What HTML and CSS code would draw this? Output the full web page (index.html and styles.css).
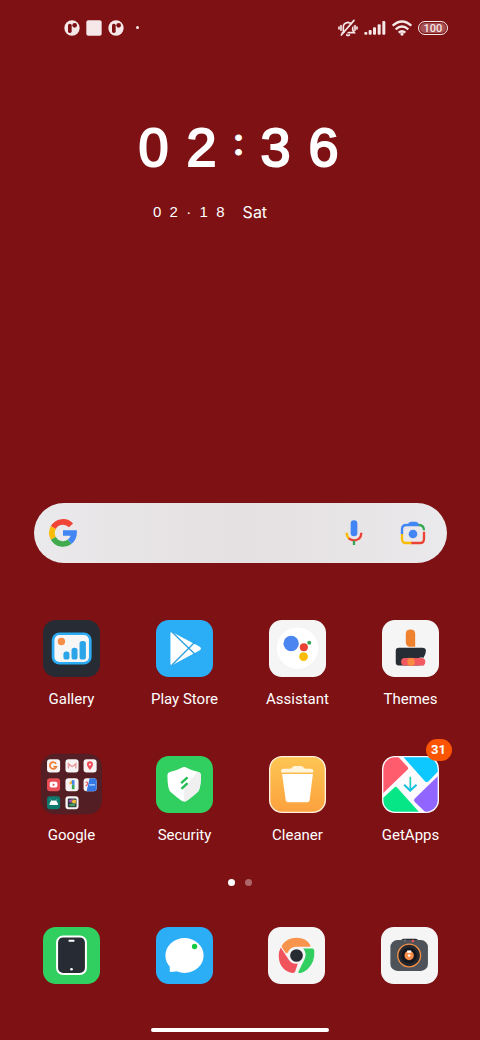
FILE: index.html
```html
<!DOCTYPE html>
<html lang="en">
<head>
<meta charset="utf-8">
<meta name="viewport" content="width=device-width, initial-scale=1">
<title>Home screen</title>
<link rel="stylesheet" href="styles.css">
</head>
<body>
<header class="status">
  <div class="status-group notifications">
    <svg width="16" height="16" viewBox="0 0 48 48" aria-hidden="true"><circle cx="24" cy="24" r="23" fill="#f6e8e8"/><rect x="12" y="11" width="11" height="28" rx="5" fill="#7d1114"/><circle cx="32" cy="16" r="7" fill="#7d1114"/></svg>
    <svg width="16" height="16" viewBox="0 0 48 48" aria-hidden="true"><rect x="1" y="1" width="46" height="46" rx="6" fill="#f6e8e8"/></svg>
    <svg width="16" height="16" viewBox="0 0 48 48" aria-hidden="true"><circle cx="24" cy="24" r="23" fill="#f6e8e8"/><rect x="12" y="11" width="11" height="28" rx="5" fill="#7d1114"/><circle cx="32" cy="16" r="7" fill="#7d1114"/></svg>
    <span class="more-dot"></span>
  </div>
  <div class="status-group">
    <svg width="20" height="18" viewBox="0 0 60 54" fill="none" stroke="#f6e8e8" stroke-width="5" stroke-linecap="round" aria-hidden="true"><path d="M16 39V24q0-12 14-14 14 2 14 14v9l5 8H14zM26 48q4 3 8 0M9 20v14M3 24v6M51 20v14M57 24v6"/><path d="M15 51 53 7" stroke="#7d1114" stroke-width="7"/><path d="M10 48 48 4"/></svg>
    <svg width="22" height="16" viewBox="0 0 66 48" fill="#f6e8e8" aria-hidden="true"><rect x="1" y="36" width="9" height="8" rx="3"/><rect x="14" y="30" width="9" height="14" rx="3"/><rect x="27" y="22" width="9" height="22" rx="3"/><rect x="41" y="13" width="9" height="31" rx="3"/><rect x="55" y="3" width="9" height="41" rx="3"/></svg>
    <svg width="20" height="16" viewBox="0 0 60 48" fill="none" stroke="#f6e8e8" stroke-width="7" aria-hidden="true"><path d="M2 17Q30-8 58 17M11 28q19-17 38 0M20 38q10-9 20 0"/><circle cx="30" cy="42" r="5" fill="#f6e8e8" stroke="none"/></svg>
    <span class="battery">100</span>
  </div>
</header>

<main class="home">
  <section class="clock">
    <time class="time" datetime="02:36"><span>0</span><span>2</span><span class="colon">:</span><span>3</span><span>6</span></time>
    <p class="date"><span>0&nbsp; 2&nbsp; ·&nbsp; 1&nbsp; 8</span><span class="weekday">Sat</span></p>
  </section>

  <form class="search" role="search">
    <svg width="28" height="28" viewBox="0 0 84 84" fill="none" stroke-width="17" aria-hidden="true"><path d="M66 19A33 33 0 0 0 13 26" stroke="#f14336"/><path d="M13 26A33 33 0 0 0 13 58" stroke="#fbbc05"/><path d="M13 58A33 33 0 0 0 62 68" stroke="#41ab4d"/><path d="M62 68A33 33 0 0 0 75 42H42" stroke="#4285f4"/></svg>
    <input class="search-input" type="text" aria-label="Search">
    <button class="search-button" type="button" aria-label="Voice search"><svg width="20" height="26" viewBox="0 0 60 78" fill="none" stroke-width="7"><rect x="20" y="1" width="20" height="48" rx="10" fill="#4285f4"/><path d="M8 38q0 12 8 18" stroke="#fbbc05"/><path d="M14 55q16 12 31 1 7-7 7-18" stroke="#ea4335"/><path d="M30 62v13" stroke="#34a853"/></svg></button>
    <button class="search-button" type="button" aria-label="Search with camera"><svg width="26" height="26" viewBox="0 0 78 78" fill="none" stroke-width="7"><path d="M23 14q3-9 10-9h14q7 0 10 9z" fill="#4285f4"/><path d="M6 43V28q0-13 13-13h38" stroke="#4285f4"/><path d="M56 15q16 0 16 16" stroke="#34a853"/><path d="M72 35v21q0 13-13 13H33" stroke="#ea4335"/><path d="M6 42v14q0 13 13 13h15" stroke="#fbbc05"/><circle cx="39" cy="42" r="13" fill="#4285f4"/></svg></button>
  </form>

  <nav class="apps" aria-label="Apps">
    <a class="app" href="#"><svg class="icon" viewBox="0 0 170 170" aria-hidden="true"><rect width="170" height="170" rx="38" fill="#272b33"/><rect x="26" y="37" width="119" height="96" rx="23" fill="#2babf4"/><rect x="34" y="45" width="103" height="80" rx="15" fill="#f6f6f6"/><circle cx="55" cy="64" r="11" fill="#f98d48"/><g fill="#2ba4e8"><rect x="61" y="94" width="18" height="24" rx="8"/><rect x="85" y="83" width="18" height="35" rx="8"/><rect x="109" y="63" width="19" height="55" rx="8"/></g></svg><span>Gallery</span></a>
    <a class="app" href="#"><svg class="icon" viewBox="0 0 170 170" aria-hidden="true"><rect width="170" height="170" rx="38" fill="#2baef6"/><path d="M47 40 129 83Q131 85 129 87L47 131z" fill="#fff" stroke="#fff" stroke-width="8" stroke-linejoin="round"/><path d="m47 35 70 68M47 135l70-70" stroke="#2b9fe0" stroke-width="4"/></svg><span>Play Store</span></a>
    <a class="app" href="#"><svg class="icon" viewBox="0 0 170 170" aria-hidden="true"><rect width="170" height="170" rx="38" fill="#f5f5f5"/><circle cx="85" cy="84" r="62" fill="#fff"/><circle cx="66" cy="70" r="23" fill="#4b86f0"/><circle cx="104" cy="81" r="12" fill="#ea4335"/><circle cx="120" cy="68" r="6" fill="#34a853"/><circle cx="103" cy="109" r="13" fill="#fbbc05"/></svg><span>Assistant</span></a>
    <a class="app" href="#"><svg class="icon" viewBox="0 0 170 170" aria-hidden="true"><rect width="170" height="170" rx="38" fill="#f5f5f5"/><path d="M71 41q0-13 14-13t14 13v39H87q-16 0-16-14z" fill="#ef822f"/><path d="M50 83h70q11 0 11 9 0 8-6 18v26H50q-9 0-9-9V92q0-9 9-9z" fill="#262d34"/><path d="M112 112h19v24h-19z" fill="#f5f5f5"/><rect x="57" y="113" width="72" height="23" rx="11" fill="#f25a62"/><path d="M76 113h19v23H76z" fill="#f4754d"/><circle cx="87" cy="125" r="11" fill="#f98b42"/></svg><span>Themes</span></a>

    <a class="app" href="#"><svg class="icon" viewBox="0 0 170 170" aria-hidden="true"><rect x="-6" y="-7" width="182" height="181" rx="42" fill="#531f25"/>
      <g fill="#f7f3f4"><rect x="12" y="10" width="39" height="39" rx="9"/><rect x="67" y="10" width="39" height="39" rx="9"/><rect x="121" y="10" width="39" height="39" rx="9"/><rect x="67" y="66" width="39" height="39" rx="9"/><rect x="121" y="66" width="39" height="39" rx="9"/><rect x="67" y="120" width="39" height="39" rx="9"/></g>
      <rect x="12" y="66" width="39" height="39" rx="9" fill="#e94d55"/><rect x="12" y="120" width="39" height="39" rx="9" fill="#10796d"/>
      <path d="M39 23a10 10 0 1 0 1 9H31" fill="none" stroke="#ef7c31" stroke-width="5"/>
      <path d="M76 37V23l11 9 11-9v14" fill="none" stroke="#eb9a9e" stroke-width="4"/>
      <path d="M140 42q-9-12-9-17a9 9 0 0 1 18 0q0 5-9 17z" fill="#ed4c56"/><circle cx="140" cy="25" r="3" fill="#fff"/>
      <rect x="20" y="77" width="23" height="17" rx="5" fill="#fff"/><path d="m29 81 7 5-7 4z" fill="#e94d55"/>
      <path d="m79 78 9-6v9l-9 5z" fill="#f5b42a"/><path d="M86 72h8v14h-8z" fill="#4285f4"/><path d="M86 86h8v13h-8z" fill="#34a853"/>
      <path d="M139 66h12q9 0 9 9v21q0 9-9 9h-21z" fill="#3478e5"/><path d="M127 79q5-4 6 2t-6 8" fill="none" stroke="#ed535a" stroke-width="3"/><path d="M138 86h17" stroke="#9bc4ff" stroke-width="5"/>
      <path d="M19 146q1-13 13-13t13 13z" fill="#fff"/><path d="m23 130 4 5m14-5-4 5" stroke="#fff" stroke-width="2"/>
      <rect x="74" y="127" width="26" height="26" rx="3" fill="#33363d"/><path d="m76 131 15-2-10 11z" fill="#a853c9"/><path d="m90 130 9 1-2 12-13-5z" fill="#f5ba3a"/><path d="m78 143 16-3 3 10H80z" fill="#4a9b66"/></svg><span>Google</span></a>
    <a class="app" href="#"><svg class="icon" viewBox="0 0 170 170" aria-hidden="true"><rect width="170" height="170" rx="38" fill="#31ce60"/><path d="M84 33q4 0 9 3 14 8 31 11 10 2 10 12 0 20-3 35-2 10-10 16-12 10-27 22-10 8-20 0-15-12-27-22-8-6-10-16-3-15-3-35 0-10 10-12 17-3 31-11 5-3 9-3z" fill="#fff"/><path d="M124 47q10 2 10 12 0 20-3 35-2 10-10 16-12 10-27 22-5 4-10 4V95z" fill="#efefef"/><path d="m75 81 19-17M76 98l18-17" stroke="#25bd52" stroke-width="7"/></svg><span>Security</span></a>
    <a class="app" href="#"><svg class="icon" viewBox="0 0 170 170" aria-hidden="true"><defs><linearGradient id="cleaner" x2="0" y2="1"><stop stop-color="#fdc653"/><stop offset="1" stop-color="#fca13e"/></linearGradient></defs><rect x="2" y="2" width="166" height="166" rx="37" fill="url(#cleaner)" stroke="#fff3df" stroke-width="4"/><path d="M36 49v-5q0-6 9-6h16q5 0 8-4 4-4 9-4h16q5 0 9 4 3 4 8 4h12q9 0 9 6v5z" fill="#fff5df"/><path d="M39 54h92l-10 78q-1 6-7 6H57q-6 0-7-6z" fill="#fff"/></svg><span>Cleaner</span></a>
    <a class="app" href="#"><svg class="icon" viewBox="0 0 170 170" aria-hidden="true"><defs><clipPath id="tile"><rect x="4" y="4" width="162" height="162" rx="35"/></clipPath><linearGradient id="arrow" x2="0" y2="1"><stop stop-color="#1fdd9a"/><stop offset="1" stop-color="#18b8ee"/></linearGradient></defs><rect width="170" height="170" rx="38" fill="#fcfafd"/><g clip-path="url(#tile)"><path d="M0 0h46l30 32q4 5-1 10L0 114z" fill="#ff5c6d"/><path d="M61 0h109v43l-31 32q-6 5-11 0z" fill="#0cc8ff"/><path d="M170 57v113h-38l-34-33q-5-5 0-10z" fill="#9165ff"/><path d="m37 94q4-4 8 0l68 76H0v-42z" fill="#07e687"/></g><path d="M82 62h5v43h-5z" fill="url(#arrow)"/><path d="m66 86 18 17 19-17" fill="none" stroke="#17c0dc" stroke-width="6"/></svg><span>GetApps</span><span class="badge">31</span></a>
  </nav>

  <div class="pages" aria-hidden="true"><span class="page current"></span><span class="page"></span></div>

  <nav class="dock" aria-label="Dock">
    <a class="app" href="#" aria-label="Phone"><svg class="icon" viewBox="0 0 170 170" aria-hidden="true"><rect width="170" height="170" rx="38" fill="#31ce60"/><rect x="42" y="28" width="86" height="112" rx="18" fill="#272b33" stroke="#fff" stroke-width="6"/><rect x="76" y="38" width="18" height="6" rx="2" fill="#fff"/><circle cx="85" cy="126" r="4" fill="#fff"/></svg></a>
    <a class="app" href="#" aria-label="Messages"><svg class="icon" viewBox="0 0 170 170" aria-hidden="true"><rect width="170" height="170" rx="38" fill="#2baef6"/><ellipse cx="85" cy="85" rx="57" ry="52" fill="#fff"/><path d="M41 105v26q0 3 4 3 13 0 24-4z" fill="#fff"/><circle cx="115" cy="58" r="8" fill="#15cc45"/></svg></a>
    <a class="app" href="#" aria-label="Chrome"><svg class="icon" viewBox="0 0 170 170" aria-hidden="true"><rect width="170" height="170" rx="38" fill="#f5f5f5"/><path d="M42 54Q57 32 85 32q29 0 41 22 3 5-3 5H86q-20 0-27 17-3 5-8-1L42 61q-2-3 0-7z" fill="#f8944b"/><path d="M38 61 62 98q9 14 27 11l-8 24q-2 5-8 4-39-8-41-50 0-15 6-26z" fill="#f1535c"/><path d="M105 64h28q4 0 5 7 3 33-20 55-11 10-24 12-5 0-3-5l18-37q8-17-4-32z" fill="#31ce60"/><circle cx="85" cy="85" r="19" fill="#272b33"/></svg></a>
    <a class="app" href="#" aria-label="Camera"><svg class="icon" viewBox="0 0 170 170" aria-hidden="true"><rect width="170" height="170" rx="38" fill="#f5f5f5"/><path d="M59 43q1-8 8-8h37q7 0 8 8z" fill="#292b30"/><rect x="28" y="39" width="112" height="92" rx="21" fill="#4e535a"/><path d="M69 37h5v6h-5z" fill="#73777e"/><circle cx="95" cy="42" r="4" fill="#f05259"/><circle cx="84" cy="85" r="34" fill="#25272e" stroke="#f39148" stroke-width="4"/><circle cx="84" cy="85" r="23" fill="#14171d"/><circle cx="84" cy="85" r="14" fill="#f98d48"/><path d="M78 70h12v7H78z" fill="#fff"/><circle cx="84" cy="85" r="4" fill="#fff"/></svg></a>
  </nav>
</main>
<div class="home-bar"></div>
</body>
</html>
```
FILE: styles.css
```css
* { box-sizing: border-box; }

body {
  margin: 0;
  min-height: 100vh;
  display: flex;
  flex-direction: column;
  background: #7d1114;
  color: #fff;
  font-family: Roboto, "Liberation Sans", sans-serif;
}

.status {
  display: flex;
  justify-content: space-between;
  align-items: center;
  height: 55px;
  padding: 0 32px 0 64px;
}

.status-group { display: flex; align-items: center; gap: 6px; }

.more-dot {
  width: 3px;
  height: 3px;
  margin-left: 6px;
  border-radius: 50%;
  background: #f6e8e8;
}

.battery {
  width: 30px;
  height: 14px;
  border: 1px solid #f6e8e8;
  border-radius: 7px;
  background: #a64f52;
  box-shadow: inset 0 0 0 1px #7d1114;
  color: #f6e8e8;
  font-size: 11px;
  font-weight: 500;
  line-height: 13px;
  text-align: center;
}

.home { display: flex; flex-direction: column; }

.clock {
  display: flex;
  flex-direction: column;
  align-items: center;
  padding-top: 60px;
  font-family: "Liberation Sans", sans-serif;
}

.time {
  display: grid;
  grid-template-columns: 48px 48px 26px 48px 48px;
  align-items: center;
  margin-right: 3px;
  font-size: 54px;
  line-height: 64px;
  text-align: center;
  -webkit-text-stroke: 2px #fff;
}

.colon {
  font-family: Roboto, sans-serif;
  font-size: 36px;
  font-weight: 700;
  line-height: 56px;
  padding-bottom: 8px;
  -webkit-text-stroke: 1px #fff;
}

.date {
  display: flex;
  align-items: center;
  gap: 18px;
  margin: 21px 60px 0 0;
  font-size: 15px;
  line-height: 24px;
}

.weekday { font-family: Inter, sans-serif; font-size: 16px; }

.search {
  display: flex;
  align-items: center;
  height: 60px;
  margin: 279px 33px 0 34px;
  padding: 0 21px 0 15px;
  border-radius: 30px;
  background: linear-gradient(90deg, #eae9eb, #e5e0e1 50%, #eae9eb);
}

.search-input {
  flex: 1;
  min-width: 0;
  height: 40px;
  border: 0;
  outline: 0;
  background: transparent;
  font: inherit;
}

.search-button {
  display: flex;
  padding: 0;
  border: 0;
  background: none;
}

.search-button + .search-button { margin-left: 36px; }

.apps, .dock {
  display: grid;
  grid-template-columns: repeat(4, 1fr);
  padding: 0 13px 0 15px;
}

.apps { margin-top: 57px; row-gap: 46px; }

.app {
  position: relative;
  display: flex;
  flex-direction: column;
  align-items: center;
  gap: 11px;
  color: #fff;
  font-size: 15px;
  line-height: 22px;
  text-decoration: none;
}

.icon { width: 57px; height: 57px; overflow: visible; }

.badge {
  position: absolute;
  top: -17px;
  left: calc(50% + 15px);
  width: 26px;
  border-radius: 12px;
  background: #fb5504;
  font-size: 13px;
  font-weight: 700;
  text-align: center;
}

.pages {
  display: flex;
  justify-content: center;
  gap: 10px;
  margin-top: 33px;
}

.page { width: 7px; height: 7px; border-radius: 50%; background: #ae6769; }
.current { background: #fff; }

.dock { margin: 41px 1px 0 0; }

.home-bar {
  width: 37%;
  height: 4px;
  margin: auto auto 8px;
  border-radius: 2px;
  background: #fff;
}
```
